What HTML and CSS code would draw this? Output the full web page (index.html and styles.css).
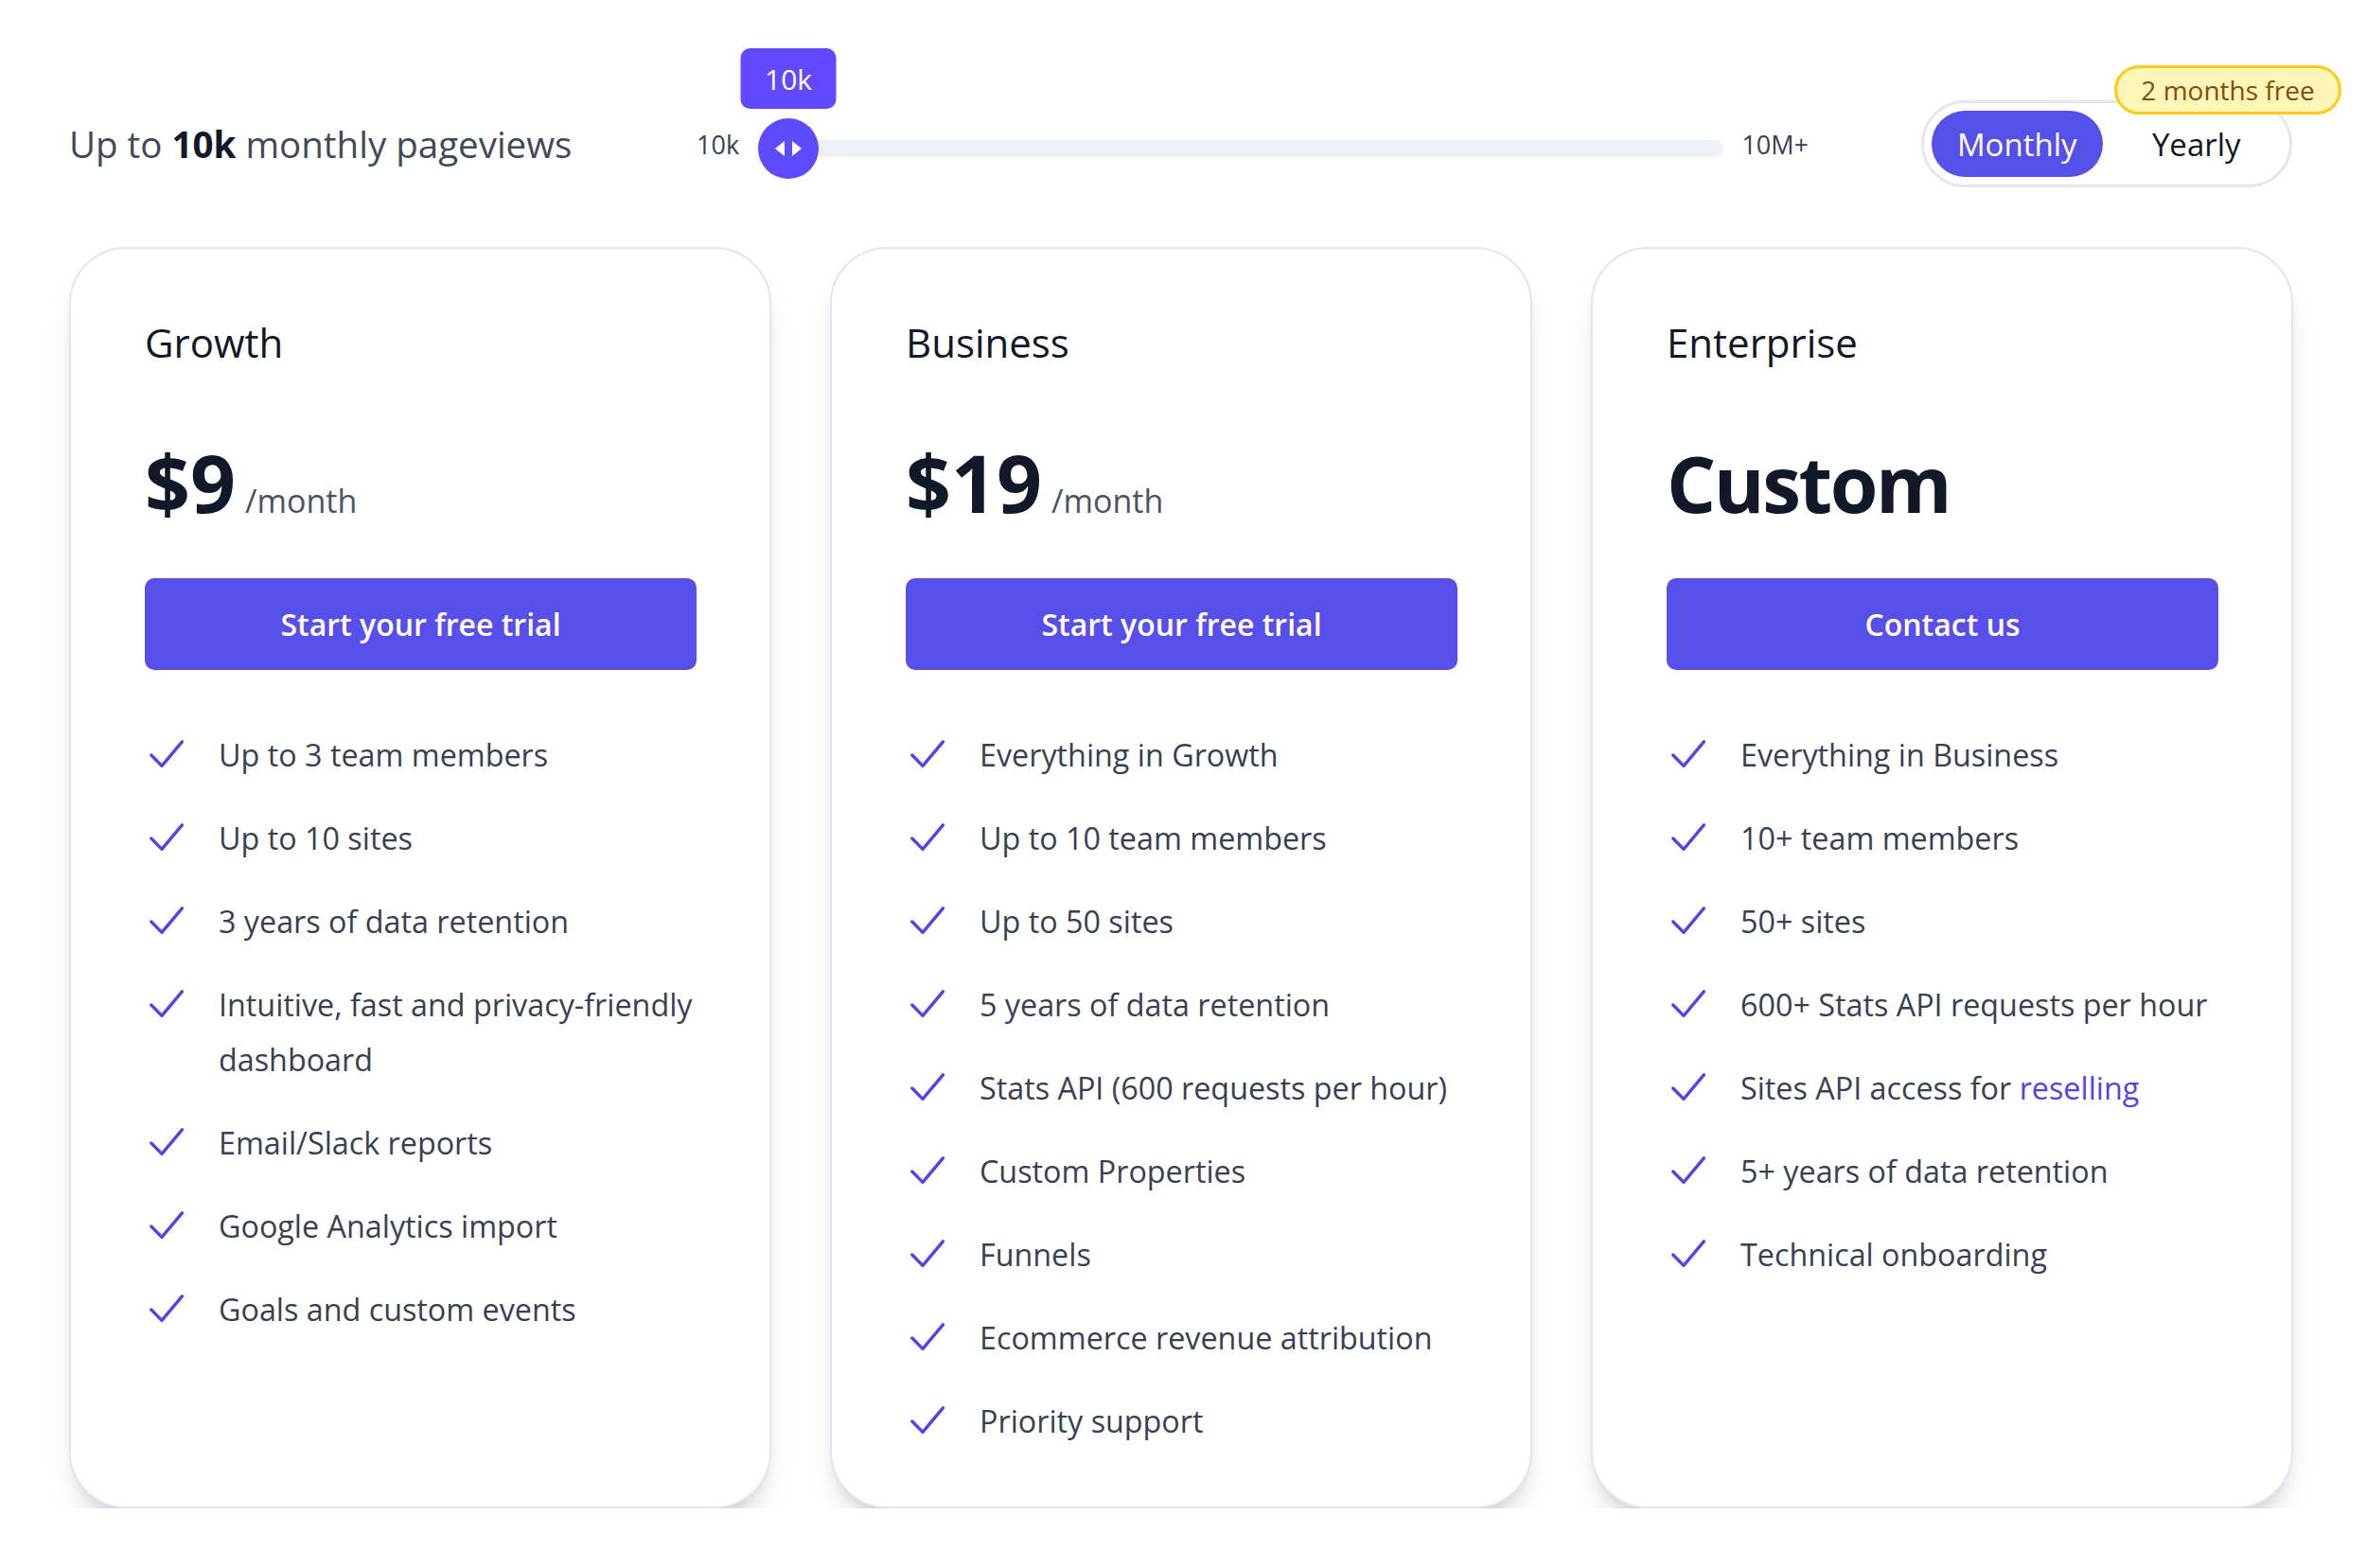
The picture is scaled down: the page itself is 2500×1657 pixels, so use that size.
FILE: index.html
```html
<!DOCTYPE html>
<html lang="en">
<head>
<meta charset="utf-8">
<title>Pricing</title>
<link rel="stylesheet" href="styles.css">
</head>
<body>
<div class="wrap">
  <header class="controls">
    <div class="pv-label">Up to <strong>10k</strong> monthly pageviews</div>
    <div class="slider">
      <span class="slider-end">10k</span>
      <div class="track">
        <div class="thumb">
          <div class="tip">10k</div>
          <svg width="64" height="64" viewBox="0 0 64 64" aria-hidden="true">
            <circle cx="32" cy="32" r="32" fill="#5e4aff"/>
            <polygon points="18,32 28,24 28,40" fill="#fff"/>
            <polygon points="46,32 36,24 36,40" fill="#fff"/>
          </svg>
        </div>
      </div>
      <span class="slider-end">10M+</span>
    </div>
    <div class="toggle">
      <span class="badge">2 months free</span>
      <button class="opt active">Monthly</button>
      <button class="opt">Yearly</button>
    </div>
  </header>

  <main class="plans">
    <section class="card">
      <h2 class="plan-name">Growth</h2>
      <p class="price"><span class="amount">$9</span><span class="per">/month</span></p>
      <a class="cta" href="#">Start your free trial</a>
      <ul class="features">
        <li><svg class="check" viewBox="0 0 36 30"><polyline points="1.8,16 13,27.4 34.4,1.8"/></svg><span>Up to 3 team members</span></li>
        <li><svg class="check" viewBox="0 0 36 30"><polyline points="1.8,16 13,27.4 34.4,1.8"/></svg><span>Up to 10 sites</span></li>
        <li><svg class="check" viewBox="0 0 36 30"><polyline points="1.8,16 13,27.4 34.4,1.8"/></svg><span>3 years of data retention</span></li>
        <li><svg class="check" viewBox="0 0 36 30"><polyline points="1.8,16 13,27.4 34.4,1.8"/></svg><span>Intuitive, fast and privacy-friendly dashboard</span></li>
        <li><svg class="check" viewBox="0 0 36 30"><polyline points="1.8,16 13,27.4 34.4,1.8"/></svg><span>Email/Slack reports</span></li>
        <li><svg class="check" viewBox="0 0 36 30"><polyline points="1.8,16 13,27.4 34.4,1.8"/></svg><span>Google Analytics import</span></li>
        <li><svg class="check" viewBox="0 0 36 30"><polyline points="1.8,16 13,27.4 34.4,1.8"/></svg><span>Goals and custom events</span></li>
      </ul>
    </section>

    <section class="card">
      <h2 class="plan-name">Business</h2>
      <p class="price"><span class="amount">$19</span><span class="per">/month</span></p>
      <a class="cta" href="#">Start your free trial</a>
      <ul class="features">
        <li><svg class="check" viewBox="0 0 36 30"><polyline points="1.8,16 13,27.4 34.4,1.8"/></svg><span>Everything in Growth</span></li>
        <li><svg class="check" viewBox="0 0 36 30"><polyline points="1.8,16 13,27.4 34.4,1.8"/></svg><span>Up to 10 team members</span></li>
        <li><svg class="check" viewBox="0 0 36 30"><polyline points="1.8,16 13,27.4 34.4,1.8"/></svg><span>Up to 50 sites</span></li>
        <li><svg class="check" viewBox="0 0 36 30"><polyline points="1.8,16 13,27.4 34.4,1.8"/></svg><span>5 years of data retention</span></li>
        <li><svg class="check" viewBox="0 0 36 30"><polyline points="1.8,16 13,27.4 34.4,1.8"/></svg><span>Stats API (600 requests per hour)</span></li>
        <li><svg class="check" viewBox="0 0 36 30"><polyline points="1.8,16 13,27.4 34.4,1.8"/></svg><span>Custom Properties</span></li>
        <li><svg class="check" viewBox="0 0 36 30"><polyline points="1.8,16 13,27.4 34.4,1.8"/></svg><span>Funnels</span></li>
        <li><svg class="check" viewBox="0 0 36 30"><polyline points="1.8,16 13,27.4 34.4,1.8"/></svg><span>Ecommerce revenue attribution</span></li>
        <li><svg class="check" viewBox="0 0 36 30"><polyline points="1.8,16 13,27.4 34.4,1.8"/></svg><span>Priority support</span></li>
      </ul>
    </section>

    <section class="card">
      <h2 class="plan-name">Enterprise</h2>
      <p class="price"><span class="amount custom">Custom</span></p>
      <a class="cta" href="#">Contact us</a>
      <ul class="features">
        <li><svg class="check" viewBox="0 0 36 30"><polyline points="1.8,16 13,27.4 34.4,1.8"/></svg><span>Everything in Business</span></li>
        <li><svg class="check" viewBox="0 0 36 30"><polyline points="1.8,16 13,27.4 34.4,1.8"/></svg><span>10+ team members</span></li>
        <li><svg class="check" viewBox="0 0 36 30"><polyline points="1.8,16 13,27.4 34.4,1.8"/></svg><span>50+ sites</span></li>
        <li><svg class="check" viewBox="0 0 36 30"><polyline points="1.8,16 13,27.4 34.4,1.8"/></svg><span>600+ Stats API requests per hour</span></li>
        <li><svg class="check" viewBox="0 0 36 30"><polyline points="1.8,16 13,27.4 34.4,1.8"/></svg><span>Sites API access for <a class="link" href="#">reselling</a></span></li>
        <li><svg class="check" viewBox="0 0 36 30"><polyline points="1.8,16 13,27.4 34.4,1.8"/></svg><span>5+ years of data retention</span></li>
        <li><svg class="check" viewBox="0 0 36 30"><polyline points="1.8,16 13,27.4 34.4,1.8"/></svg><span>Technical onboarding</span></li>
      </ul>
    </section>
  </main>
</div>
</body>
</html>
```

FILE: styles.css
```css
* { box-sizing: border-box; }

html, body {
  margin: 0;
  padding: 0;
  background: #ffffff;
}

body {
  font-family: "Open Sans", "Noto Sans", "Liberation Sans", sans-serif;
  color: #374151;
}

.wrap {
  margin: 0 78px 0 73px;
}

/* ---------- top controls ---------- */
.controls {
  margin-top: 106px;
  height: 92px;
  display: flex;
  align-items: center;
}

.pv-label {
  flex: 0 0 663px;
  font-size: 38.5px;
  color: #414a59;
  white-space: nowrap;
}

.pv-label strong {
  color: #111827;
  font-weight: 700;
}

.slider {
  flex: 0 0 1175px;
  display: flex;
  align-items: center;
  gap: 20px;
}

.slider-end {
  font-size: 27px;
  color: #374151;
  line-height: 1;
}

.track {
  position: relative;
  flex: 1;
  height: 14px;
  margin-top: 6px;
  border-radius: 7px;
  background: #eef0f8;
  box-shadow: 0 3px 5px rgba(17, 24, 39, 0.09);
}

.thumb {
  position: absolute;
  left: 0;
  top: 50%;
  width: 64px;
  height: 64px;
  margin-top: -30px;
}

.thumb svg {
  display: block;
}

.tip {
  position: absolute;
  left: 50%;
  bottom: calc(100% + 10px);
  transform: translateX(-50%);
  width: 101px;
  height: 64px;
  border-radius: 10px;
  background: #6049ff;
  color: #ffffff;
  font-size: 30px;
  display: flex;
  align-items: center;
  justify-content: center;
}

.toggle {
  position: relative;
  margin-left: auto;
  width: 392px;
  height: 92px;
  border: 3px solid #e5e7eb;
  border-radius: 46px;
  padding: 8px;
  display: flex;
  gap: 9px;
}

.opt {
  flex: 1;
  border: 0;
  border-radius: 36px;
  background: transparent;
  font-family: inherit;
  font-size: 33px;
  font-weight: 500;
  color: #111827;
  padding: 0;
  cursor: pointer;
}

.opt.active {
  background: #5650ea;
  color: #ffffff;
}

.badge {
  position: absolute;
  left: 201px;
  top: -40px;
  width: 240px;
  height: 52px;
  border: 3px solid #facc15;
  border-radius: 26px;
  background: #fef6b6;
  color: #854d0e;
  font-size: 28px;
  display: flex;
  align-items: center;
  justify-content: center;
  white-space: nowrap;
}

/* ---------- plan cards ---------- */
.plans {
  margin-top: 63px;
  display: grid;
  grid-template-columns: repeat(3, 742px);
  gap: 62px;
}

.card {
  border: 2px solid #e4e5ee;
  border-radius: 60px;
  background: #ffffff;
  padding: 78px 77px 62px 78px;
  box-shadow: 0 22px 30px -10px rgba(17, 24, 39, 0.17), 0 8px 14px -8px rgba(17, 24, 39, 0.12);
}

.plan-name {
  margin: 0;
  font-size: 42px;
  line-height: 42px;
  font-weight: 500;
  color: #111827;
}

.price {
  margin: 86px 0 0;
  height: 82px;
  display: flex;
  align-items: baseline;
  white-space: nowrap;
}

.amount {
  font-size: 84px;
  line-height: 82px;
  font-weight: 700;
  color: #111827;
}

.amount.custom {
  font-size: 82px;
  letter-spacing: -0.03em;
}

.per {
  margin-left: 10px;
  font-size: 34px;
  color: #4b5563;
}

.cta {
  margin-top: 60px;
  display: flex;
  align-items: center;
  justify-content: center;
  height: 97px;
  border-radius: 10px;
  background: #584fea;
  color: #ffffff;
  font-size: 32px;
  font-weight: 600;
  text-decoration: none;
}

.features {
  list-style: none;
  margin: 60px 0 0;
  padding: 0;
  display: flex;
  flex-direction: column;
  gap: 30px;
}

.features li {
  display: flex;
  align-items: flex-start;
  gap: 37px;
  padding-left: 5px;
  font-size: 32.3px;
  line-height: 58px;
  color: #374151;
}

.check {
  flex: 0 0 36px;
  width: 36px;
  height: 30px;
  margin-top: 14px;
  fill: none;
  stroke: #4f46e5;
  stroke-width: 3.4;
  stroke-linecap: round;
  stroke-linejoin: round;
}

.link {
  color: #4f46e5;
  text-decoration: none;
}
```
